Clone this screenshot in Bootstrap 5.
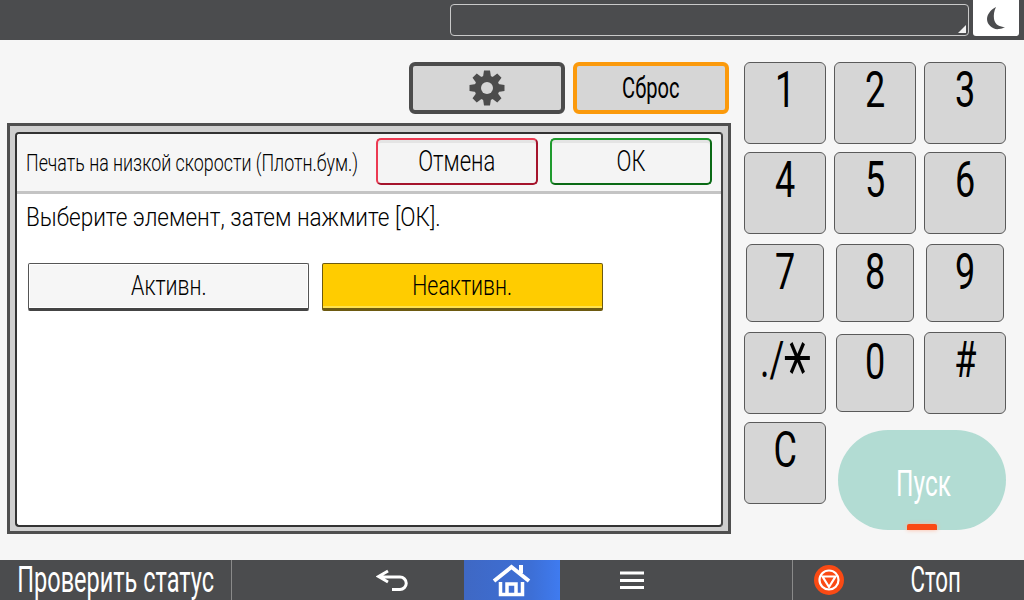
<!DOCTYPE html>
<html lang="ru">
<head>
<meta charset="utf-8">
<title>Панель</title>
<link href="https://cdn.jsdelivr.net/npm/bootstrap@5.3.0/dist/css/bootstrap.min.css" rel="stylesheet">
<style>
html,body{width:1024px;height:600px;overflow:hidden;margin:0}
body{font-family:"Roboto","Liberation Sans",sans-serif;background:#f6f6f6;color:#000}
.cx{display:inline-block;white-space:nowrap;transform:scaleX(.72);line-height:1}
.topbar{height:40px;background:#4b4c4e;padding:4px 5px 4px 450px}
.searchbox{width:519px;height:32px;border:1px solid #c9c9c9;border-radius:4px;position:relative}
.searchbox i{position:absolute;right:2px;bottom:2px;width:0;height:0;border-left:8px solid transparent;border-bottom:8px solid #f2f2f2}
.moonbtn{width:46px;height:36px;margin-top:-4px;margin-left:4px;background:#fff;border-radius:0 0 3px 3px}
.mainarea{height:520px;background:#f6f6f6}
.leftcol{width:744px;padding:22px 13px 0 7px}
.toolrow{gap:8px;padding-right:2px;height:52px}
.toolbtn{width:156px;height:52px;background:#d6d6d6;border:4px solid #4c4c4c;border-radius:6px;font-size:30px;color:#000}
.toolbtn.reset{border-color:#fb9a0c}
.toolbtn.reset .cx{transform:scaleX(.67)}
.dlg{width:724px;height:411px;margin-top:9px;background:#cfcfcf;border:3px solid #4f4f4f;padding:6px 5px 4px 5px}
.dlginner{height:100%;background:#fff;border:2px solid #333;border-right-color:#444;border-radius:4px;overflow:hidden}
.dlghead{height:60px;background:#f6f6f6;border-bottom:3px solid #c4c4c4;padding:4px 9px 0 9px}
.dlgtitle{font-size:24px;font-weight:300;width:350px;height:47px;padding-top:3px;color:#000}
.dlgtitle .cx{transform:scaleX(.743);transform-origin:left center}
.hbtn{width:162px;height:47px;background:#f4f4f4;border-radius:5px;border:2px solid #ec3a52;border-bottom-color:#a5142c;border-right-color:#a5142c;font-size:29px;font-weight:300;color:#000;margin-right:12px;box-shadow:inset 0 3px 0 #e4e4e4}
.hbtn .cx{transform:scaleX(.76)}
.hbtn.ok{border-color:#1f9a2e;border-bottom-color:#0a6a15;border-right-color:#0a6a15;margin-right:0}
.dlgmsg{font-size:25px;font-weight:300;padding:5px 0 0 9px;height:69px;color:#000}
.dlgmsg .cx{transform:scaleX(.9);transform-origin:left center}
.optrow{padding-left:11px;gap:13px}
.optbtn{width:281px;height:48px;border:1px solid #555;border-bottom:3px solid #444;border-radius:2px;background:#f6f6f6;font-size:27px;font-weight:300;color:#000;box-shadow:inset 0 0 0 1px #fff}
.optbtn .cx{transform:scaleX(.79)}
.optbtn.sel{background:#ffcc00;border-color:#6d5a10;box-shadow:inset 0 -2px 0 #ffe14d}
.keypad{display:grid;grid-template-columns:repeat(3,82px);grid-auto-rows:82px;gap:8px;padding-top:22px}
.keybtn{background:#d6d6d6;border:1px solid #5a5a5a;border-radius:6px;font-size:50px;color:#000;text-align:center;padding:0;line-height:1;display:flex;justify-content:center;align-items:flex-start}
.keybtn .cx{margin-top:2px}
.keybtn.sm{margin:2px}
.sextile{display:inline-block;font-family:"DejaVu Sans",sans-serif;font-size:62px;line-height:0;transform:translateY(-4px)}
.startbtn{grid-column:span 2;margin:8px 0 0 4px;height:100px;background:#b2dcd3;border-radius:50px;border:0;color:#fff;font-size:37px;position:relative;padding:8px 0 0 4px}
.startbtn .cx{transform:scaleX(.66)}
.startled{position:absolute;left:69px;bottom:0;width:30px;height:6px;background:#fa4a14;border-radius:2px 2px 0 0;box-shadow:0 0 4px #ffb89e}
.botbar{height:40px;background:#4b4c4e;color:#fff}
.botcell{width:232px;height:40px}
.botcell.first{border-right:1px solid #8a8a8a}
.botcell.backc{padding-right:54px}
.botcell.menuc{padding-left:60px}
.botcell.last{border-left:1px solid #8a8a8a;padding-left:21px}
.homecell{width:96px;height:40px;background:linear-gradient(90deg,#3f68c4,#3d6fd6 70%,#3f7bf0)}
.stat{font-size:36px;transform:scaleX(.653)}
.stoptxt{font-size:36px;margin-left:51px;transform:scaleX(.62)}
</style>
</head>
<body>
<div class="topbar d-flex">
  <div class="searchbox"><i></i></div>
  <div class="moonbtn d-flex align-items-center justify-content-center">
    <svg width="18" height="24" viewBox="0 0 18 24"><path d="M9 1C3 4 0 9 0 13c0 6 6 11 12 10 2 0 4-1 6-2-5 0-10-2-11-8C6.500 9 7 5 9 1z" fill="#4b4c4e"/></svg>
  </div>
</div>
<div class="mainarea d-flex">
  <div class="leftcol">
    <div class="toolrow d-flex justify-content-end">
      <button class="toolbtn btn p-0 d-flex align-items-center justify-content-center" type="button" aria-label="Настройки">
        <svg width="38" height="38" viewBox="0 0 38 38"><g fill="#4c4c4c"><circle cx="19" cy="19" r="12.500"/><path d="M15 8 16 1.500h6L23 8zM15 30l1 6.500h6l1-6.500zM8 15 1.500 16v6L8 23zM30 15l6.500 1v6L30 23z"/><path transform="rotate(45 19 19)" d="M15 8 16 1.500h6L23 8zM15 30l1 6.500h6l1-6.500zM8 15 1.500 16v6L8 23zM30 15l6.500 1v6L30 23z"/></g><circle cx="19" cy="19" r="6" fill="#d6d6d6"/></svg>
      </button>
      <button class="toolbtn reset btn p-0 d-flex align-items-center justify-content-center" type="button"><span class="cx">Сброс</span></button>
    </div>
    <div class="dlg">
      <div class="dlginner">
        <div class="dlghead d-flex align-items-start">
          <div class="dlgtitle flex-shrink-0 d-flex align-items-center"><span class="cx">Печать на низкой скорости (Плотн.бум.)</span></div>
          <button class="hbtn btn p-0 flex-shrink-0 d-flex align-items-center justify-content-center" type="button"><span class="cx">Отмена</span></button>
          <button class="hbtn ok btn p-0 flex-shrink-0 d-flex align-items-center justify-content-center" type="button"><span class="cx">ОК</span></button>
        </div>
        <div class="dlgmsg"><span class="cx">Выберите элемент, затем нажмите [ОК].</span></div>
        <div class="optrow d-flex">
          <button class="optbtn btn p-0 d-flex align-items-center justify-content-center" type="button"><span class="cx">Активн.</span></button>
          <button class="optbtn sel btn p-0 d-flex align-items-center justify-content-center" type="button"><span class="cx">Неактивн.</span></button>
        </div>
      </div>
    </div>
  </div>
  <div class="keypad">
    <button class="keybtn" type="button"><span class="cx">1</span></button>
    <button class="keybtn" type="button"><span class="cx">2</span></button>
    <button class="keybtn" type="button"><span class="cx">3</span></button>
    <button class="keybtn" type="button"><span class="cx">4</span></button>
    <button class="keybtn" type="button"><span class="cx">5</span></button>
    <button class="keybtn" type="button"><span class="cx">6</span></button>
    <button class="keybtn sm" type="button"><span class="cx">7</span></button>
    <button class="keybtn sm" type="button"><span class="cx">8</span></button>
    <button class="keybtn sm" type="button"><span class="cx">9</span></button>
    <button class="keybtn" type="button"><span class="cx">./<span class="sextile">⚹</span></span></button>
    <button class="keybtn sm" type="button"><span class="cx">0</span></button>
    <button class="keybtn" type="button"><span class="cx">#</span></button>
    <button class="keybtn" type="button"><span class="cx">C</span></button>
    <button class="startbtn" type="button"><span class="cx">Пуск</span><span class="startled"></span></button>
  </div>
</div>
<div class="botbar d-flex">
  <div class="botcell first d-flex align-items-center justify-content-center"><span class="cx stat">Проверить статус</span></div>
  <div class="botcell backc d-flex align-items-center justify-content-end">
    <svg width="34" height="26" viewBox="0 0 34 26"><path d="M12 4 2.500 9.500 12 15M3 10h21a6 6 0 0 1 0 12.500h-8" fill="none" stroke="#fff" stroke-width="3"/></svg>
  </div>
  <div class="homecell d-flex align-items-center justify-content-center">
    <svg width="40" height="34" viewBox="0 0 40 34"><path d="M2 18 19.500 4 37 18" fill="none" stroke="#fff" stroke-width="4"/><rect x="27" y="2" width="4" height="8" fill="#fff"/><path d="M8.500 19v12.500h22V19M15 31V21h9v10" fill="none" stroke="#fff" stroke-width="3.500"/></svg>
  </div>
  <div class="botcell menuc d-flex align-items-center">
    <svg width="24" height="20" viewBox="0 0 24 20"><path d="M0 3h24M0 10.500h24M0 17.500h24" stroke="#fff" stroke-width="3"/></svg>
  </div>
  <div class="botcell last d-flex align-items-center">
    <svg width="30" height="30" viewBox="0 0 30 30"><circle cx="15" cy="15" r="15" fill="#fa4a14"/><circle cx="15" cy="15" r="9.500" fill="none" stroke="#fff" stroke-width="2.200"/><path d="M8.500 11.500h13L15 22z" fill="none" stroke="#fff" stroke-width="2.200"/></svg>
    <span class="cx stoptxt">Стоп</span>
  </div>
</div>
</body>
</html>
